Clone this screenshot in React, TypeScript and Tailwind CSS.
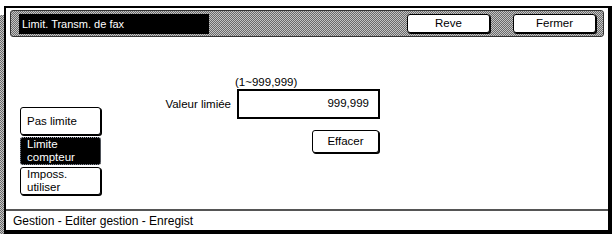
const checker =
  "bg-[repeating-conic-gradient(#6a6a6a_0_25%,#c4c4c4_0_50%)] bg-[length:2px_2px]";

function TopButton({ label }: { label: string }) {
  return (
    <button className="w-[83px] h-[19px] bg-white border border-black rounded-[3px] shadow-[1px_1px_0_#000] text-[11.5px] leading-none text-black flex items-center justify-center">
      {label}
    </button>
  );
}

function ModeButton({ label, active }: { label: string; active?: boolean }) {
  return (
    <button
      className={
        active
          ? "w-[81px] h-[28px] bg-black text-white border border-dotted border-gray-400 rounded-[3px] text-left pl-[6px] text-[11.5px] leading-[13px]"
          : "w-[81px] h-[28px] bg-white text-black border border-black rounded-[3px] shadow-[1px_1px_0_#000] text-left pl-[6px] text-[11.5px] leading-[13px]"
      }
    >
      {label.split("\n").map((l) => (
        <div key={l}>{l}</div>
      ))}
    </button>
  );
}

export default function App() {
  return (
    <div className="w-[612px] h-[234px] bg-white flex font-['Liberation_Sans',Arial,sans-serif] text-black overflow-hidden">
      {/* left shade strip */}
      <div className={`w-[4px] mt-[15px] h-[219px] ${checker}`} />

      {/* frame */}
      <div className="mt-[6px] w-[608px] h-[228px] border-l-2 border-t-2 border-r-4 border-b-4 border-black flex flex-col">
        {/* header bar */}
        <div
          className={`mt-[2px] mx-[4px] h-[27px] rounded-[3px] border border-[#333] flex items-center pl-[8px] pr-[7px] ${checker}`}
        >
          <div className="w-[190px] h-[20px] bg-black text-white text-[11px] leading-[20px] pl-[3px]">
            Limit. Transm. de fax
          </div>
          <div className="ml-auto flex gap-[23px]">
            <TopButton label="Reve" />
            <TopButton label="Fermer" />
          </div>
        </div>

        {/* body */}
        <div className="h-[172px] flex">
          <div className="pl-[14px] pt-[70px] flex flex-col gap-[2px]">
            <ModeButton label="Pas limite" />
            <ModeButton label={"Limite\ncompteur"} active />
            <ModeButton label={"Imposs.\nutiliser"} />
          </div>

          <div className="w-[130px] pt-[60px] text-right text-[11.5px] leading-[14px]">
            Valeur limiée
          </div>

          <div className="ml-[4px] pt-[38px] flex flex-col">
            <div className="text-[11.5px] leading-[14px]">(1~999,999)</div>
            <div className="ml-[2px] w-[143px] h-[30px] border-2 border-black flex items-center justify-end pr-[9px] text-[11.5px]">
              999,999
            </div>
            <button className="mt-[11px] ml-[77px] w-[67px] h-[23px] bg-white border border-black rounded-[3px] shadow-[1px_1px_0_#000] text-[11.5px] flex items-center justify-center">
              Effacer
            </button>
          </div>
        </div>

        {/* footer */}
        <div className="h-[2px] bg-[#555]" />
        <div className="h-[19px] pl-[7px] flex items-center text-[12px]">
          Gestion - Editer gestion - Enregist
        </div>
      </div>
    </div>
  );
}
